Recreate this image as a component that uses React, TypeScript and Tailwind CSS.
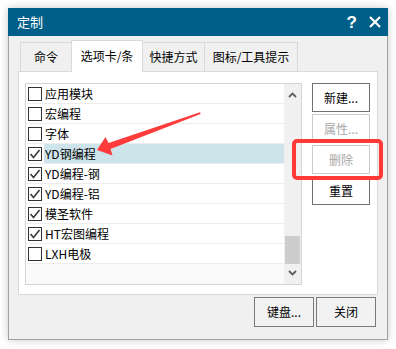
import React from "react";

const FONT = { fontFamily: '"Noto Sans CJK SC", "Noto Sans", sans-serif' };

const items = [
  { label: "应用模块", checked: false },
  { label: "宏编程", checked: false },
  { label: "字体", checked: false },
  { label: "YD钢编程", checked: true, active: true },
  { label: "YD编程-钢", checked: true },
  { label: "YD编程-铝", checked: true },
  { label: "模圣软件", checked: true },
  { label: "HT宏图编程", checked: true },
  { label: "LXH电极", checked: false },
];

function CheckBox({ checked }: { checked: boolean }) {
  return (
    <div className="w-[14px] h-[14px] border border-[#333333] bg-white flex items-center justify-center">
      {checked && (
        <svg width="12" height="12" viewBox="0 0 12 12">
          <polyline points="1.5,6 4.5,9.5 10.5,2" fill="none" stroke="#3a3a3a" strokeWidth="1.6" />
        </svg>
      )}
    </div>
  );
}

function SideButton({ label, disabled }: { label: string; disabled?: boolean }) {
  return (
    <div
      className={
        "w-[58px] h-[29px] flex items-center justify-center bg-white text-[12px] border " +
        (disabled ? "border-[#cccccc] text-[#a8a8a8]" : "border-[#707070] text-black")
      }
    >
      {label}
    </div>
  );
}

export default function App() {
  return (
    <div className="relative w-[396px] h-[349px] bg-white pt-[8px] pl-[8px]" style={FONT}>
      {/* 对话框 */}
      <div className="w-[380px] h-[332px] flex flex-col shadow-[0_0_8px_rgba(0,0,0,0.22)]">
        {/* 标题栏 */}
        <div className="h-[28px] bg-[#005f88] flex items-center pl-[9px] pr-[7px] text-white">
          <span className="text-[13px]">定制</span>
          <span className="ml-auto text-[17px] font-bold leading-none" style={{ fontFamily: '"Liberation Sans", sans-serif' }}>
            ?
          </span>
          <svg width="12" height="12" viewBox="0 0 12 12" className="ml-[12px]">
            <path d="M1 1 L11 11 M11 1 L1 11" stroke="white" strokeWidth="2.2" />
          </svg>
        </div>

        {/* 主体 */}
        <div className="flex-1 flex flex-col bg-[#f0f0f0] border-x border-b border-[#a0a0a0] px-[9px]">
          {/* 选项卡 */}
          <div className="mt-[4px] h-[32px] -mb-px flex items-end pl-[2px] text-[12px] text-black">
            <div className="w-[52px] h-[29px] mb-px border-l border-t border-r border-[#d9d9d9] bg-[#f0f0f0] flex items-center justify-center">
              命令
            </div>
            <div className="relative z-10 -ml-px w-[72px] h-[32px] border-l border-t border-r border-[#d9d9d9] bg-white flex items-center justify-center pb-[2px]">
              选项卡/条
            </div>
            <div className="-ml-px w-[63px] h-[29px] mb-px border-l border-t border-r border-[#d9d9d9] bg-[#f0f0f0] flex items-center justify-center">
              快捷方式
            </div>
            <div className="-ml-px w-[94px] h-[29px] mb-px border-l border-t border-r border-[#d9d9d9] bg-[#f0f0f0] flex items-center justify-center">
              图标/工具提示
            </div>
          </div>

          {/* 选项卡面板 */}
          <div className="h-[224px] border border-[#d9d9d9] bg-white flex pl-[6px] pt-[11px]">
            {/* 列表 */}
            <div className="w-[277px] h-[202px] border border-[#d4d4d4] flex">
              <div className="flex-1 flex flex-col text-[12px] text-black">
                {items.map((it) => (
                  <div key={it.label} className="h-[20px] flex border-b border-[#ededed]">
                    <div className="w-[18px] flex items-center pl-[2px]">
                      <CheckBox checked={it.checked} />
                    </div>
                    <div className={"flex-1 flex items-center pl-[1px] " + (it.active ? "bg-[#cde5ea]" : "")}>
                      {it.label}
                    </div>
                  </div>
                ))}
                <div className="flex-1 bg-[#fafafa]" />
              </div>
              {/* 滚动条 */}
              <div className="w-[17px] bg-[#f0f0f0] flex flex-col items-center">
                <svg width="9" height="6" viewBox="0 0 9 6" className="mt-[8px]">
                  <polyline points="1,5 4.5,1.5 8,5" fill="none" stroke="#606060" strokeWidth="1.8" />
                </svg>
                <div className="mt-[138px] w-[15px] h-[28px] bg-[#cdcdcd]" />
                <svg width="9" height="6" viewBox="0 0 9 6" className="mt-[6px]">
                  <polyline points="1,1 4.5,4.5 8,1" fill="none" stroke="#606060" strokeWidth="1.8" />
                </svg>
              </div>
            </div>

            {/* 按钮 */}
            <div className="ml-[10px] flex flex-col gap-[2px]">
              <SideButton label="新建..." />
              <SideButton label="属性..." disabled />
              <SideButton label="删除" disabled />
              <SideButton label="重置" />
            </div>
          </div>

          {/* 底部按钮 */}
          <div className="mt-[2px] flex justify-end gap-[2px] mr-[2px] text-[12px] text-black">
            <div className="w-[60px] h-[30px] border border-[#7a7a7a] bg-[#f2f2f2] flex items-center justify-center">键盘...</div>
            <div className="w-[60px] h-[30px] border border-[#7a7a7a] bg-[#f2f2f2] flex items-center justify-center">关闭</div>
          </div>
        </div>
      </div>

      {/* 红框标注 */}
      <div className="absolute left-[292px] top-[139px] w-[91px] h-[41px] border-[4px] border-[#ff3838] rounded-[5px]" />

      {/* 红色箭头 */}
      <svg className="absolute left-0 top-0" width="396" height="349" viewBox="0 0 396 349">
        <polygon
          points="97,150 105.5,137 108.5,143 200,112.2 200.6,114 110.5,149 112.5,155.5"
          fill="#ff3b3b"
        />
      </svg>
    </div>
  );
}
